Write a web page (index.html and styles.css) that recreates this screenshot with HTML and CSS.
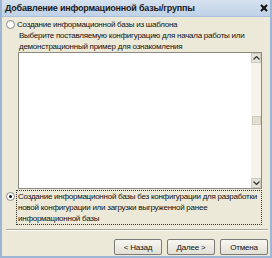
FILE: index.html
```html
<!DOCTYPE html>
<html lang="ru">
<head>
    <meta charset="UTF-8">
    <title>Добавление информационной базы/группы</title>
    <link rel="stylesheet" href="styles.css">
</head>
<body>
    <div class="window">
        <div class="titlebar">
            <span class="title">Добавление информационной базы/группы</span>
            <svg class="close" width="8" height="8" viewBox="0 0 8 8"><path d="M1 1 L7 7 M7 1 L1 7" stroke="#111" stroke-width="2"/></svg>
        </div>
        <div class="content">
            <div class="option first">
                <span class="radio"></span>
                <span class="label">Создание информационной базы из шаблона</span>
            </div>
            <p class="hint">Выберите поставляемую конфигурацию для начала работы или<br>демонстрационный пример для ознакомления</p>
            <div class="listbox">
                <div class="list"></div>
                <div class="scrollbar">
                    <span class="arrow">
                        <svg width="7" height="4" viewBox="0 0 7 4"><path d="M0.5 3.5 L3.5 0.5 L6.5 3.5" fill="none" stroke="#333" stroke-width="1.2"/></svg>
                    </span>
                    <span class="track"><span class="thumb"></span></span>
                    <span class="arrow">
                        <svg width="7" height="4" viewBox="0 0 7 4"><path d="M0.5 0.5 L3.5 3.5 L6.5 0.5" fill="none" stroke="#333" stroke-width="1.2"/></svg>
                    </span>
                </div>
            </div>
            <div class="option selected">
                <span class="radio checked"></span>
                <span class="label focus">Создание информационной базы без конфигурации для разработки<br>новой конфигурации или загрузки выгруженной ранее<br>информационной базы</span>
            </div>
            <div class="separator"></div>
            <div class="buttons">
                <button class="btn">&lt; Назад</button>
                <button class="btn">Далее &gt;</button>
                <button class="btn">Отмена</button>
            </div>
        </div>
    </div>
</body>
</html>
```

FILE: styles.css
```css
body, html {
    margin: 0;
    padding: 0;
    width: 272px;
    height: 258px;
    overflow: hidden;
    font-family: "Liberation Sans", Arial, sans-serif;
    font-size: 8px;
    letter-spacing: -0.25px;
    color: #111;
}

.window {
    display: flex;
    flex-direction: column;
    width: 272px;
    height: 258px;
    box-sizing: border-box;
    border: 2px solid #9db6d6;
    border-top: none;
    background: #ece9d8;
}

.titlebar {
    flex: none;
    display: flex;
    align-items: center;
    justify-content: space-between;
    height: 17px;
    box-sizing: border-box;
    padding: 0 2px 0 3px;
    background: linear-gradient(#d6e2f0, #bfd1e7);
    border-bottom: 1px solid #a9bfdc;
}

.title {
    font-weight: bold;
    font-size: 9px;
    letter-spacing: -0.2px;
    color: #1a1a1a;
}

.content {
    flex: none;
    display: flex;
    flex-direction: column;
    padding: 3px 0 0 4px;
}

.option {
    flex: none;
    display: flex;
    align-items: flex-start;
    gap: 2px;
    line-height: 11px;
}

.option.first {
    line-height: 10px;
}

.radio {
    flex: none;
    width: 9px;
    height: 9px;
    margin-top: 1px;
    border: 1px solid #8a8a8a;
    border-radius: 50%;
    box-sizing: border-box;
    background: #fff;
    display: flex;
    align-items: center;
    justify-content: center;
}

.option.first .radio {
    margin-top: 0;
}

.radio.checked::after {
    content: "";
    width: 3px;
    height: 3px;
    border-radius: 50%;
    background: #111;
}

.hint {
    flex: none;
    margin: 0 0 0 13px;
    line-height: 11px;
}

.listbox {
    flex: none;
    display: flex;
    height: 137px;
    box-sizing: border-box;
    margin: 0 8px 0 12px;
    border: 1px solid #8c8a80;
    background: #fff;
}

.list {
    flex: 1;
}

.scrollbar {
    width: 10px;
    display: flex;
    flex-direction: column;
    background: #f5f3ea;
}

.arrow {
    flex: none;
    height: 10px;
    display: flex;
    align-items: center;
    justify-content: center;
    background: #e4e2d6;
    border: 1px solid #cfcdc0;
    box-sizing: border-box;
}

.track {
    flex: 1;
    display: flex;
    align-items: center;
    justify-content: center;
}

.thumb {
    width: 9px;
    height: 9px;
    background: #e2e0d2;
    border: 1px solid #cfcbb8;
    box-sizing: border-box;
}

.selected {
    margin-top: 2px;
}

.label.focus {
    flex: 1;
    outline: 1px dotted #333;
    padding: 0 1px;
    margin-right: 9px;
}

.separator {
    flex: none;
    height: 0;
    margin: 5px 2px 0 0;
    border-top: 1px solid #aca899;
    border-bottom: 1px solid #fff;
}

.buttons {
    flex: none;
    display: flex;
    justify-content: flex-end;
    gap: 5px;
    padding: 8px 2px 0 0;
}

.btn {
    width: 48px;
    height: 16px;
    padding: 0;
    font-family: "Liberation Sans", Arial, sans-serif;
    font-size: 8px;
    letter-spacing: -0.2px;
    color: #111;
    background: linear-gradient(#f7f6f1, #e2e0d4);
    border: 1px solid #7a7a7a;
    border-radius: 2px;
}
```
